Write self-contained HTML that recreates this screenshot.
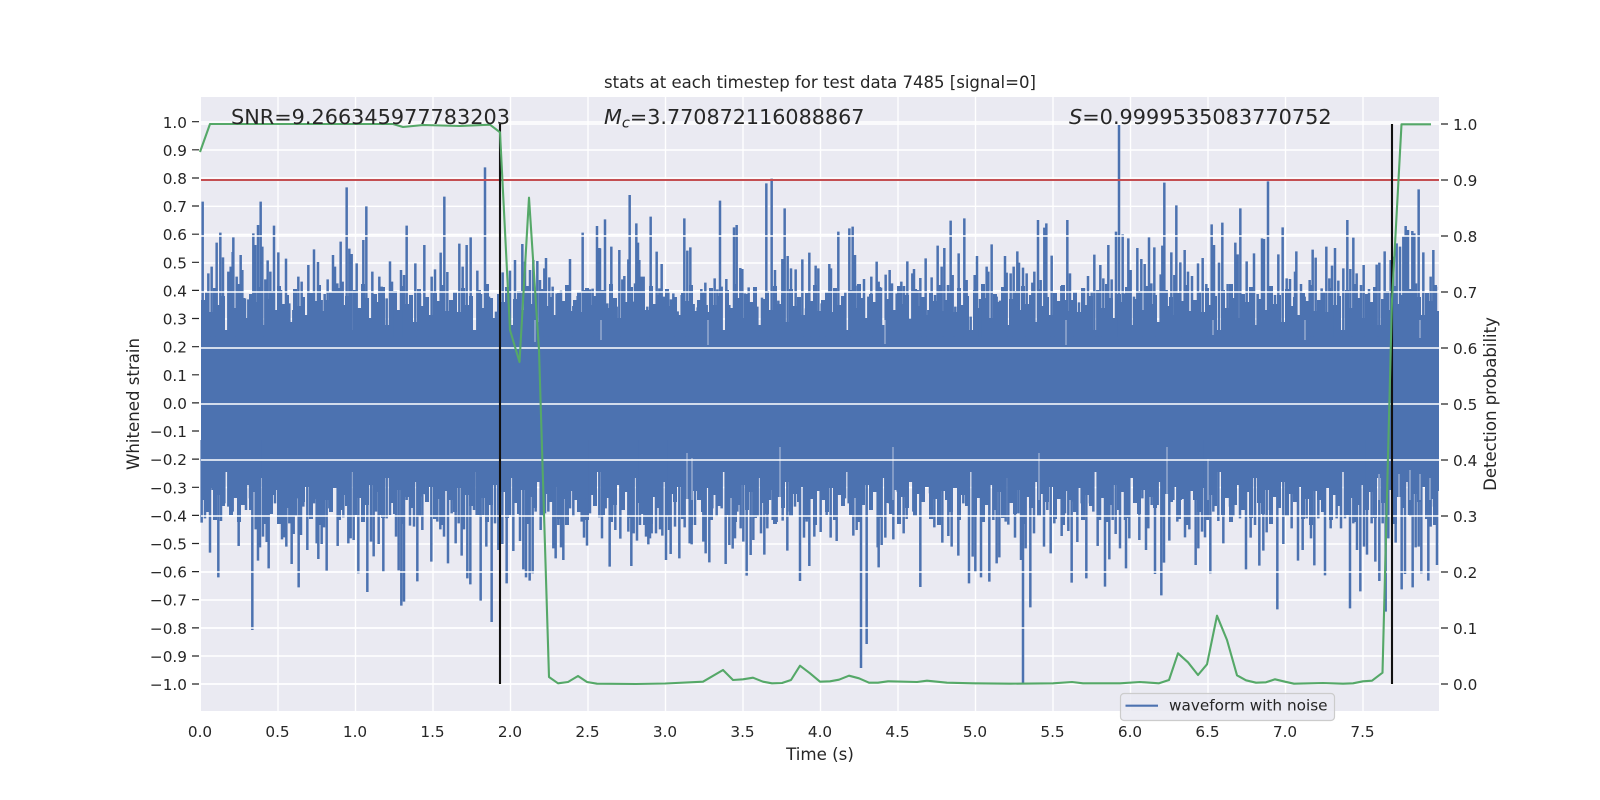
<!DOCTYPE html>
<html><head><meta charset="utf-8"><style>
html,body{margin:0;padding:0;background:#fff}
svg{display:block}
text{font-family:"DejaVu Sans","Liberation Sans",sans-serif;fill:#262626;font-size:15.28px}
</style></head><body>
<svg width="1600" height="800" viewBox="0 0 1600 800" xmlns="http://www.w3.org/2000/svg">
<rect width="1600" height="800" fill="#fff"/>
<rect x="201" y="97" width="1238" height="614" fill="#EAEAF2"/>
<g stroke="#fff" stroke-width="1.4" fill="none">
<path d="M278 97V711M355.500 97V711M433 97V711M510.500 97V711M588 97V711M665.500 97V711M743 97V711M820.500 97V711M898 97V711M975.500 97V711M1053 97V711M1130.500 97V711M1208 97V711M1285.500 97V711M1363 97V711"/>
<path d="M201 122H1439M201 150H1439M201 178H1439M201 206.300H1439M201 234.500H1439M201 263H1439M201 290.700H1439M201 319H1439M201 347H1439M201 375H1439M201 403H1439M201 431H1439M201 459.500H1439M201 487.500H1439M201 515.700H1439M201 544H1439M201 572H1439M201 600H1439M201 628H1439M201 656H1439M201 684H1439"/>
</g>
<!-- blue waveform -->
<rect x="201" y="336" width="1238" height="134" fill="#4C72B0"/>
<defs>
<path id="envT" d="M0 340V300h4V292h4V312h4V288h4V305h4V296h4V330h4V290h4V308h4V284h4V298h4V318h4V294h4V302h4V287h4V325h4V299h4V291h4V310h4V286h4V304h4V295h4V322h4V289h4V306h4V297h4V315h4V293h4V301h4V285h4V311h4V340Z" fill="#4C72B0"/>
<path id="envB" d="M0 465V500h4V512h4V488h4V520h4V495h4V506h4V472h4V515h4V498h4V522h4V505h4V485h4V510h4V492h4V518h4V478h4V503h4V514h4V490h4V524h4V497h4V508h4V482h4V516h4V494h4V502h4V487h4V519h4V499h4V525h4V491h4V465Z" fill="#4C72B0"/>
</defs>
<g>
<use href="#envT" x="201"/><use href="#envT" x="325"/><use href="#envT" x="449"/><use href="#envT" x="573"/><use href="#envT" x="697"/><use href="#envT" x="821"/><use href="#envT" x="945"/><use href="#envT" x="1069"/><use href="#envT" x="1193"/><use href="#envT" x="1317"/>
<use href="#envB" x="201"/><use href="#envB" x="325"/><use href="#envB" x="449"/><use href="#envB" x="573"/><use href="#envB" x="697"/><use href="#envB" x="821"/><use href="#envB" x="945"/><use href="#envB" x="1069"/><use href="#envB" x="1193"/><use href="#envB" x="1317"/>
</g>
<g stroke="#4C72B0" stroke-width="7.5" fill="none">
<path transform="translate(190 90) scale(.33333)" d="M38 335V740M55 550V740M65 530V740M80 458V740M91 428V740M99 502V740M115 545V740M122 530V740M130 442V740M128 486V740M140 560V740M152 495V740M157 540V740M165 625V740M175 628V740M190 430V740M196 465V740M204 405V740M212 335V740M217 470V740M226 568V740M233 511V740M241 545V740M252 407V740M265 487V740M273 600V740M288 506V740M298 640V740M310 660V740M325 560V740M335 575V740M355 525V740M365 650V740M372 478V740M384 516V740M395 630V740M404 612V740M413 568V740M429 495V740M435 530V740M442 580V740M452 455V740M458 575V740M470 292V740M478 476V740M485 492V740M500 520V740M510 655V740M520 450V740M529 349V740M547 545V740M555 640V740M568 560V740M575 590V740M590 625V740M600 514V740M606 575V740M615 645V740M633 540V740M642 555V740M650 407V740M660 650V740M676 520V740M690 612V740M703 465V740M712 640V740M725 560V740M735 538V740M752 488V740M763 320V740M772 546V740M783 645V740M795 680V740M808 461V740M818 530V740M830 465V740M842 442V740M862 542V740M873 612V740M885 232V740M897 620V740M905 662V740M918 665V740M925 622V740M938 547V740M948 640V740M960 542V740M975 510V740M997 462V740M1005 515V740M1020 540V740M1030 510V740M1042 513V740M1050 570V740M1063 535V740M1068 504V740M1078 562V740M1088 590V740M1100 610V740M1113 602V740M1128 658V740M1140 507V740M1150 648V740M1163 618V740M1178 428V740M1185 600V740M1200 598V740M1208 596V740M1221 408V740M1228 474V740"/>
<path transform="translate(600 90) scale(.33333)" d="M0 475V740M15 388V740M22 640V740M34 470V740M50 650V740M58 480V740M67 568V740M73 558V740M85 508V740M89 315V740M98 635V740M105 580V740M109 400V740M114 458V740M118 510V740M125 560V740M131 560V740M142 650V740M152 380V740M158 672V740M170 485V740M178 595V740M185 522V740M192 620V740M199 598V740M205 605V740M213 628V740M220 610V740M233 664V740M245 615V740M253 385V740M262 482V740M271 472V740M281 642V740M293 652V740M304 597V740M316 578V740M320 645V740M334 630V740M344 565V740M352 598V740M360 332V740M365 590V740M379 567V740M388 645V740M402 412V740M410 405V740M421 534V740M427 537V740M435 610V740M446 592V740M455 675V740M463 640V740M472 650V740M486 623V740M499 280V740M515 266V740M525 540V740M535 632V740M547 507V740M554 355V740M563 498V740M573 535V740M587 538V740M597 665V740M607 508V740M618 655V740M628 488V740M640 640V740M647 527V740M655 535V740M665 640V740M673 638V740M688 522V740M693 535V740M705 600V740M715 425V740M727 650V740M736 606V740M748 415V740M758 410V740M765 495V740M773 587V740M785 632V740M792 567V740M805 620V740M814 560V740M830 515V740M836 575V740M843 593V740M857 554V740M869 540V740M876 580V740M890 610V740M904 575V740M912 588V740M922 514V740M930 686V740M937 550V740M942 537V740M953 600V740M961 564V740M977 505V740M985 660V740M995 562V740M1005 615V740M1013 467V740M1025 530V740M1033 474V740M1044 585V740M1052 392V740M1058 555V740M1066 650V740M1076 490V740M1093 385V740M1100 570V740M1112 680V740M1124 555V740M1131 498V740M1140 627V740M1149 650V740M1160 530V740M1165 545V740M1175 463V740M1190 620V740M1200 632V740M1208 630V740M1215 498V740M1220 548V740"/>
<path transform="translate(1010 90) scale(.33333)" d="M2 550V740M11 530V740M22 484V740M27 518V740M39 533V740M50 550V740M67 578V740M73 545V740M84 390V740M92 570V740M103 413V740M109 400V740M125 497V740M137 650V740M154 588V740M165 630V740M172 390V740M180 550V740M187 650V740M207 637V740M222 595V740M234 558V740M245 605V740M253 494V740M262 600V740M271 525V740M280 565V740M295 465V740M305 568V740M318 425V740M327 105V740M338 433V740M345 610V740M355 445V740M362 540V740M372 620V740M382 474V740M394 507V740M404 522V740M417 442V740M424 580V740M433 472V740M452 553V740M457 467V740M463 278V740M470 600V740M484 487V740M493 555V740M499 346V740M511 517V740M524 480V740M534 545V740M546 558V740M564 520V740M578 504V740M589 582V740M605 403V740M612 465V740M627 518V740M637 398V740M653 582V740M664 615V740M676 458V740M683 493V740M691 355V740M710 514V740M720 675V740M732 490V740M743 612V740M756 445V740M762 447V740M774 274V740M782 630V740M795 615V740M805 493V740M818 412V740M830 565V740M840 567V740M855 545V740M859 484V740M873 582V740M884 620V740M899 570V740M908 479V740M917 503V740M935 595V740M949 470V740M958 565V740M966 527V740M975 474V740M985 572V740M1000 535V740M1012 390V740M1021 537V740M1030 443V740M1040 550V740M1053 585V740M1061 525V740M1077 597V740M1100 524V740M1108 518V740M1124 484V740M1142 510V740M1150 500V740M1160 460V740M1170 470V740M1180 440V740M1187 408V740M1194 420V740M1207 423V740M1213 430V740M1218 580V740M1226 298V740M1240 487V740M1253 620V740M1262 560V740M1270 480V740M1278 590V740"/>
<path transform="translate(190 440) scale(.33333)" d="M35 0V248M45 0V235M60 0V338M68 0V150M85 0V412M93 0V243M103 0V190M115 0V200M128 0V215M146 0V318M160 0V165M168 0V210M180 0V175M187 0V570M197 0V268M204 0V362M210 0V322M219 0V290M226 0V252M230 0V306M236 0V385M248 0V165M255 0V190M268 0V205M276 0V298M282 0V292M289 0V320M298 0V250M305 0V372M311 0V282M320 0V175M326 0V442M333 0V285M340 0V200M352 0V330M362 0V192M372 0V190M380 0V310M385 0V357M395 0V312M402 0V262M410 0V392M418 0V205M425 0V205M443 0V318M453 0V210M460 0V232M475 0V310M482 0V295M491 0V300M505 0V400M522 0V190M532 0V456M543 0V305M551 0V349M558 0V215M566 0V312M572 0V225M580 0V395M590 0V235M600 0V225M610 0V180M618 0V290M626 0V391M634 0V497M642 0V485M650 0V180M660 0V257M672 0V260M682 0V424M690 0V170M697 0V270M708 0V165M724 0V365M735 0V200M742 0V245M751 0V268M762 0V290M774 0V370M785 0V220M797 0V310M806 0V250M815 0V347M822 0V268M832 0V415M841 0V433M852 0V210M860 0V225M872 0V482M880 0V225M889 0V320M897 0V155M905 0V546M915 0V250M925 0V330M937 0V312M950 0V430M960 0V225M970 0V333M990 0V303M1000 0V388M1008 0V412M1019 0V422M1028 0V400M1037 0V215M1052 0V270M1065 0V220M1075 0V215M1090 0V325M1097 0V355M1105 0V255M1113 0V322M1120 0V360M1132 0V248M1140 0V205M1150 0V230M1165 0V175M1175 0V245M1182 0V293M1191 0V317M1200 0V220M1212 0V165M1228 0V232"/>
<path transform="translate(600 440) scale(.33333)" d="M6 0V295M17 0V205M29 0V380M37 0V225M46 0V270M61 0V296M70 0V170M85 0V275M94 0V378M101 0V280M111 0V302M120 0V255M133 0V255M138 0V290M145 0V313M150 0V295M155 0V280M168 0V280M180 0V268M187 0V287M198 0V360M207 0V270M212 0V342M225 0V260M238 0V355M247 0V170M254 0V262M269 0V310M275 0V313M285 0V255M300 0V175M310 0V305M317 0V340M328 0V367M337 0V205M350 0V230M365 0V205M377 0V372M388 0V315M398 0V326M405 0V295M412 0V215M422 0V265M430 0V305M440 0V407M452 0V345M460 0V300M473 0V230M483 0V280M493 0V344M502 0V265M510 0V180M518 0V240M530 0V246M548 0V242M562 0V332M570 0V215M585 0V200M600 0V423M612 0V293M620 0V245M628 0V378M643 0V290M662 0V276M680 0V225M692 0V293M710 0V303M720 0V165M735 0V175M746 0V190M760 0V287M770 0V270M783 0V684M791 0V185M800 0V612M812 0V195M833 0V322M836 0V382M845 0V315M856 0V293M868 0V190M880 0V298M893 0V155M911 0V280M920 0V237M940 0V215M961 0V441M990 0V160M1003 0V262M1015 0V150M1027 0V308M1045 0V288M1055 0V320M1075 0V347M1090 0V190M1107 0V430M1118 0V350M1126 0V395M1143 0V412M1150 0V240M1168 0V425M1180 0V240M1190 0V370M1198 0V352M1207 0V205M1217 0V245M1225 0V254"/>
<path transform="translate(1010 440) scale(.33333)" d="M5 0V160M15 0V293M25 0V220M33 0V360M39 0V730M47 0V325M61 0V502M72 0V280M85 0V185M102 0V320M112 0V210M122 0V340M133 0V250M155 0V288M165 0V220M175 0V273M185 0V428M192 0V185M202 0V306M215 0V190M229 0V415M240 0V190M250 0V215M263 0V318M270 0V240M285 0V440M298 0V358M308 0V240M317 0V282M330 0V325M345 0V240M348 0V385M358 0V295M378 0V175M388 0V300M397 0V175M408 0V330M415 0V265M425 0V195M435 0V402M443 0V195M454 0V466M462 0V368M478 0V302M490 0V180M502 0V245M512 0V180M525 0V292M538 0V268M557 0V375M565 0V325M576 0V275M585 0V292M601 0V400M610 0V215M625 0V243M640 0V310M660 0V200M670 0V230M690 0V235M708 0V388M722 0V293M735 0V255M748 0V377M760 0V332M770 0V277M780 0V210M802 0V508M820 0V312M830 0V200M845 0V265M864 0V362M878 0V330M890 0V235M903 0V295M913 0V376M925 0V235M945 0V406M962 0V265M980 0V235M993 0V265M1005 0V235M1020 0V505M1030 0V250M1041 0V330M1051 0V454M1062 0V320M1071 0V344M1085 0V250M1096 0V365M1108 0V423M1118 0V250M1127 0V515M1135 0V295M1157 0V308M1175 0V448M1185 0V402M1197 0V225M1208 0V442M1217 0V322M1226 0V320M1234 0V400M1255 0V422M1262 0V260M1272 0V200M1281 0V375"/>
</g>
<!-- light notches in the body -->
<g stroke="#EAEAF2" stroke-width="1" fill="none" opacity=".7">
<path d="M687 453V500M692 458V500M780 447V500M893 447V500M1039 453V500M1167 447V500M1208 459V500M1379 474V500M1399 474V500M1410 470V500M1420 474V500M1430 478V500M535 320V342M601 320V340M708 320V345M885 320V344M1066 320V345M1213 320V335M1305 320V340M1420 320V338"/>
</g>
<rect x="1439" y="280" width="3" height="260" fill="#fff"/>
<!-- right axis grid on top -->
<g stroke="#fff" stroke-width="1.5" fill="none">
<path d="M201 124H1439M201 180H1439M201 236H1439M201 292H1439M201 348H1439M201 404H1439M201 460H1439M201 516H1439M201 572H1439M201 628H1439M201 684H1439"/>
</g>
<path d="M201 180H1439" stroke="#C44E52" stroke-width="2" fill="none"/>
<path d="M500 124V684M1392 124V684" stroke="#111" stroke-width="2.1" fill="none"/>
<path d="M200 152L210 124L393 124L403 127L423 125L460 126L490 124.700L500 132.300L510 330L519.500 362L529 197.700L539 350L549 677L558 683.300L568 682L578 676L587 682L597 683.700L636 684L665 683.500L703 681.700L723 670L733 680L743 679.300L753 677.700L763 681.700L772 683.300L782 683L791 680L800 665.700L810 673.300L820 681.700L830 681.300L839 679.700L849 675.700L859 678.300L869 682.700L878 682.700L888 681.300L917 682L927 680.700L947 682.700L973 683.300L1010 683.700L1053 683.300L1072 682L1083 683.300L1120 683.300L1140 682L1159 683.300L1169 680L1178 653.300L1188 662.300L1198 675L1207 664.300L1217 615.700L1227 640L1237 675.300L1246 680.300L1256 682.700L1266 682.300L1275 679.300L1285 681.700L1294 683.700L1323 683L1343 683.700L1353 683.300L1363 681.300L1372 680.700L1382.500 672.700L1392 300L1401.500 124.300L1431 124.300" stroke="#55A868" stroke-width="2.1" fill="none" stroke-linejoin="round"/>
<!-- ticks -->
<g stroke="#262626" stroke-width="1.2" fill="none">
<path d="M192 121.700H199M192 149.800H199M192 178H199M192 206H199M192 234.200H199M192 262.300H199M192 290.400H199M192 318.500H199M192 346.700H199M192 374.800H199M192 402.900H199M192 431H199M192 459.100H199M192 487.300H199M192 515.400H199M192 543.500H199M192 571.600H199M192 599.700H199M192 627.900H199M192 656H199M192 684H199"/>
<path d="M1441 124H1448M1441 180H1448M1441 236H1448M1441 292H1448M1441 348H1448M1441 404H1448M1441 460H1448M1441 516H1448M1441 572H1448M1441 628H1448M1441 684H1448"/>
</g>
<g text-anchor="end">
<text x="187" y="128">1.0</text><text x="187" y="155.800">0.9</text><text x="187" y="184">0.8</text><text x="187" y="212">0.7</text><text x="187" y="240.200">0.6</text><text x="187" y="268.300">0.5</text><text x="187" y="296.400">0.4</text><text x="187" y="324.500">0.3</text><text x="187" y="352.700">0.2</text><text x="187" y="380.800">0.1</text><text x="187" y="408.900">0.0</text><text x="187" y="437">−0.1</text><text x="187" y="465.100">−0.2</text><text x="187" y="493.300">−0.3</text><text x="187" y="521.400">−0.4</text><text x="187" y="549.500">−0.5</text><text x="187" y="577.600">−0.6</text><text x="187" y="605.700">−0.7</text><text x="187" y="633.900">−0.8</text><text x="187" y="662">−0.9</text><text x="187" y="690">−1.0</text>
</g>
<g text-anchor="start">
<text x="1453" y="130">1.0</text><text x="1453" y="186">0.9</text><text x="1453" y="242">0.8</text><text x="1453" y="298">0.7</text><text x="1453" y="354">0.6</text><text x="1453" y="410">0.5</text><text x="1453" y="466">0.4</text><text x="1453" y="522">0.3</text><text x="1453" y="578">0.2</text><text x="1453" y="634">0.1</text><text x="1453" y="690">0.0</text>
</g>
<g text-anchor="middle">
<text x="200" y="737">0.0</text><text x="277.500" y="737">0.5</text><text x="355" y="737">1.0</text><text x="432.500" y="737">1.5</text><text x="510" y="737">2.0</text><text x="587.500" y="737">2.5</text><text x="665" y="737">3.0</text><text x="742.500" y="737">3.5</text><text x="820" y="737">4.0</text><text x="897.500" y="737">4.5</text><text x="975" y="737">5.0</text><text x="1052.500" y="737">5.5</text><text x="1130" y="737">6.0</text><text x="1207.500" y="737">6.5</text><text x="1285" y="737">7.0</text><text x="1362.500" y="737">7.5</text>
</g>
<text x="820" y="88" text-anchor="middle" style="font-size:16.55px">stats at each timestep for test data 7485 [signal=0]</text>
<text x="820" y="760" text-anchor="middle" style="font-size:16.67px">Time (s)</text>
<text transform="translate(139 404) rotate(-90)" text-anchor="middle" style="font-size:16.6px">Whitened strain</text>
<text transform="translate(1496 404) rotate(-90)" text-anchor="middle" style="font-size:16.55px">Detection probability</text>
<text x="231" y="124" style="font-size:20.8px">SNR=9.266345977783203</text>
<text x="604" y="124" style="font-size:20.7px"><tspan font-style="italic">M</tspan><tspan font-style="italic" dy="3.500" style="font-size:14.600px">c</tspan><tspan dy="-3.500">=3.770872116088867</tspan></text>
<text x="1069" y="124" style="font-size:20.83px"><tspan font-style="italic">S</tspan>=0.9999535083770752</text>
<!-- legend -->
<rect x="1120.500" y="693.500" width="214" height="27" rx="3.500" fill="#EAEAF2" fill-opacity=".85" stroke="#CCCCCC" stroke-width="1.200"/>
<path d="M1125.500 705.700H1158" stroke="#4C72B0" stroke-width="2.1" fill="none"/>
<text x="1169" y="710.700">waveform with noise</text>
</svg>
</body></html>
